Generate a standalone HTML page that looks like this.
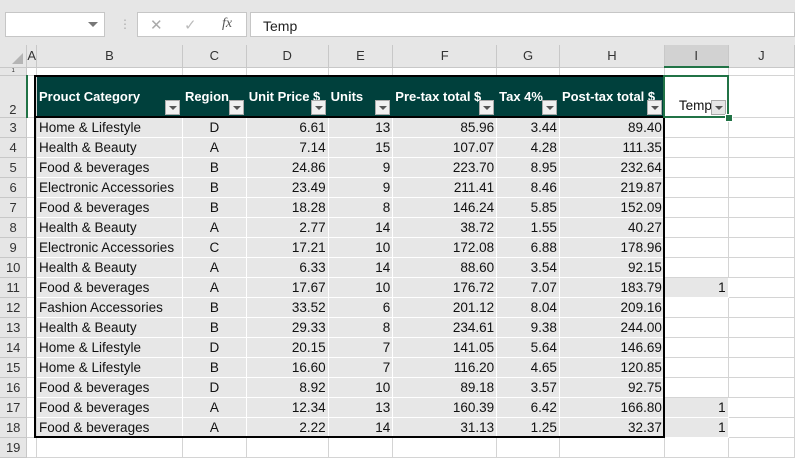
<!DOCTYPE html>
<html><head><meta charset="utf-8"><style>
body{margin:0;width:795px;height:460px;overflow:hidden;background:#fff;font-family:"Liberation Sans",sans-serif;position:relative}
.top{position:absolute;left:0;top:0;width:795px;height:45px;background:#e6e6e6}
.nb{position:absolute;left:5px;top:12px;width:100px;height:25px;background:#fff;border:1px solid #c6c6c6;box-sizing:border-box}
.fb{position:absolute;left:137px;top:12px;width:110px;height:25px;background:#fff;border:1px solid #c6c6c6;box-sizing:border-box}
.fx{position:absolute;left:250px;top:12px;width:545px;height:25px;background:#fff;border:1px solid #c6c6c6;box-sizing:border-box;font-size:14px;padding:5px 0 0 12px;color:#222}
table{position:absolute;left:0;top:45px;border-collapse:collapse;table-layout:fixed;font-size:13.5px}
td{padding:0 2px;white-space:nowrap;overflow:hidden;border-right:1px solid #d4d4d4;border-bottom:1px solid #d4d4d4;box-sizing:border-box;color:#111}
tr.ch td{background:#e6e6e6;text-align:center;color:#333;height:22px;border-color:#c8c8c8;font-size:13px}
td.rh{background:#e6e6e6;text-align:center;color:#333;border-color:#c8c8c8;padding:0;font-size:13px}
tr.d td{height:20px;background:#e7e7e7;border-color:#fff}
tr.d td.e{background:#fff;border-color:#d4d4d4}
tr.d td.rh{background:#e6e6e6;border-color:#c8c8c8}
.r{text-align:right}.c{text-align:center}
tr.h td.t{background:#00403c;color:#fff;font-weight:bold;position:relative;vertical-align:middle;border-color:#00403c;font-size:13px}
.f{position:absolute;right:2px;bottom:2px;width:15px;height:15px;background:#f0f0f0;border:1px solid #aaa;box-sizing:border-box}
.f:after{content:"";position:absolute;left:3px;top:5px;border-left:4px solid transparent;border-right:4px solid transparent;border-top:4px solid #555}
</style></head><body>
<div class="top">
<div class="nb"><span style="position:absolute;right:6px;top:9px;border-left:5px solid transparent;border-right:5px solid transparent;border-top:5px solid #777"></span></div>
<div style="position:absolute;left:119px;top:17px;color:#aaa;font-size:12px">⋮</div>
<div class="fb"><span style="position:absolute;left:12px;top:3px;color:#aaa;font-size:15px">✕</span><span style="position:absolute;left:46px;top:3px;color:#bbb;font-size:15px">✓</span><span style="position:absolute;left:84px;top:3px;color:#555;font-size:14px;font-style:italic;font-family:'Liberation Serif',serif">fx</span></div>
<div class="fx">Temp</div>
</div>
<table>
<colgroup><col style="width:27px"><col style="width:8px"><col style="width:146px"><col style="width:64px"><col style="width:82px"><col style="width:65px"><col style="width:104px"><col style="width:63px"><col style="width:105px"><col style="width:64px"><col style="width:67px"></colgroup>
<tr class="ch"><td class="rh" style="position:relative"><span style="position:absolute;right:3px;bottom:3px;border-left:11px solid transparent;border-bottom:11px solid #b4b4b4"></span></td><td style="padding:0">A</td><td>B</td><td>C</td><td>D</td><td>E</td><td>F</td><td>G</td><td>H</td><td style="background:#d2d2d2;border-bottom:2px solid #217346">I</td><td>J</td></tr>
<tr style="height:8px"><td class="rh" style="font-size:6px">1</td><td></td><td></td><td></td><td></td><td></td><td></td><td></td><td></td><td></td><td></td></tr>
<tr class="h" style="height:42px"><td class="rh" style="vertical-align:bottom;border-right:2px solid #217346">2</td><td></td>
<td class="t">Prouct Category<span class="f"></span></td><td class="t">Region<span class="f"></span></td><td class="t">Unit Price $<span class="f"></span></td><td class="t">Units<span class="f"></span></td><td class="t">Pre-tax total $<span class="f"></span></td><td class="t">Tax 4%<span class="f"></span></td><td class="t">Post-tax total $<span class="f"></span></td>
<td style="position:relative;vertical-align:bottom;padding:0 0 4px 14px">Temp<span class="f" style="background:#e6e6e6"></span></td><td></td></tr>
<tr class="d"><td class="rh">3</td><td class="e"></td><td>Home &amp; Lifestyle</td><td class="c">D</td><td class="r">6.61</td><td class="r">13</td><td class="r">85.96</td><td class="r">3.44</td><td class="r">89.40</td><td class="e"></td><td class="e"></td></tr>
<tr class="d"><td class="rh">4</td><td class="e"></td><td>Health &amp; Beauty</td><td class="c">A</td><td class="r">7.14</td><td class="r">15</td><td class="r">107.07</td><td class="r">4.28</td><td class="r">111.35</td><td class="e"></td><td class="e"></td></tr>
<tr class="d"><td class="rh">5</td><td class="e"></td><td>Food &amp; beverages</td><td class="c">B</td><td class="r">24.86</td><td class="r">9</td><td class="r">223.70</td><td class="r">8.95</td><td class="r">232.64</td><td class="e"></td><td class="e"></td></tr>
<tr class="d"><td class="rh">6</td><td class="e"></td><td>Electronic Accessories</td><td class="c">B</td><td class="r">23.49</td><td class="r">9</td><td class="r">211.41</td><td class="r">8.46</td><td class="r">219.87</td><td class="e"></td><td class="e"></td></tr>
<tr class="d"><td class="rh">7</td><td class="e"></td><td>Food &amp; beverages</td><td class="c">B</td><td class="r">18.28</td><td class="r">8</td><td class="r">146.24</td><td class="r">5.85</td><td class="r">152.09</td><td class="e"></td><td class="e"></td></tr>
<tr class="d"><td class="rh">8</td><td class="e"></td><td>Health &amp; Beauty</td><td class="c">A</td><td class="r">2.77</td><td class="r">14</td><td class="r">38.72</td><td class="r">1.55</td><td class="r">40.27</td><td class="e"></td><td class="e"></td></tr>
<tr class="d"><td class="rh">9</td><td class="e"></td><td>Electronic Accessories</td><td class="c">C</td><td class="r">17.21</td><td class="r">10</td><td class="r">172.08</td><td class="r">6.88</td><td class="r">178.96</td><td class="e"></td><td class="e"></td></tr>
<tr class="d"><td class="rh">10</td><td class="e"></td><td>Health &amp; Beauty</td><td class="c">A</td><td class="r">6.33</td><td class="r">14</td><td class="r">88.60</td><td class="r">3.54</td><td class="r">92.15</td><td class="e"></td><td class="e"></td></tr>
<tr class="d"><td class="rh">11</td><td class="e"></td><td>Food &amp; beverages</td><td class="c">A</td><td class="r">17.67</td><td class="r">10</td><td class="r">176.72</td><td class="r">7.07</td><td class="r">183.79</td><td class="r">1</td><td class="e"></td></tr>
<tr class="d"><td class="rh">12</td><td class="e"></td><td>Fashion Accessories</td><td class="c">B</td><td class="r">33.52</td><td class="r">6</td><td class="r">201.12</td><td class="r">8.04</td><td class="r">209.16</td><td class="e"></td><td class="e"></td></tr>
<tr class="d"><td class="rh">13</td><td class="e"></td><td>Health &amp; Beauty</td><td class="c">B</td><td class="r">29.33</td><td class="r">8</td><td class="r">234.61</td><td class="r">9.38</td><td class="r">244.00</td><td class="e"></td><td class="e"></td></tr>
<tr class="d"><td class="rh">14</td><td class="e"></td><td>Home &amp; Lifestyle</td><td class="c">D</td><td class="r">20.15</td><td class="r">7</td><td class="r">141.05</td><td class="r">5.64</td><td class="r">146.69</td><td class="e"></td><td class="e"></td></tr>
<tr class="d"><td class="rh">15</td><td class="e"></td><td>Home &amp; Lifestyle</td><td class="c">B</td><td class="r">16.60</td><td class="r">7</td><td class="r">116.20</td><td class="r">4.65</td><td class="r">120.85</td><td class="e"></td><td class="e"></td></tr>
<tr class="d"><td class="rh">16</td><td class="e"></td><td>Food &amp; beverages</td><td class="c">D</td><td class="r">8.92</td><td class="r">10</td><td class="r">89.18</td><td class="r">3.57</td><td class="r">92.75</td><td class="e"></td><td class="e"></td></tr>
<tr class="d"><td class="rh">17</td><td class="e"></td><td>Food &amp; beverages</td><td class="c">A</td><td class="r">12.34</td><td class="r">13</td><td class="r">160.39</td><td class="r">6.42</td><td class="r">166.80</td><td class="r">1</td><td class="e"></td></tr>
<tr class="d"><td class="rh">18</td><td class="e"></td><td>Food &amp; beverages</td><td class="c">A</td><td class="r">2.22</td><td class="r">14</td><td class="r">31.13</td><td class="r">1.25</td><td class="r">32.37</td><td class="r">1</td><td class="e"></td></tr>
<tr class="d"><td class="rh">19</td><td class="e"></td><td class="e"></td><td class="e"></td><td class="e"></td><td class="e"></td><td class="e"></td><td class="e"></td><td class="e"></td><td class="e"></td><td class="e"></td></tr>
</table>
<div style="position:absolute;left:34px;top:75px;width:631px;height:363px;border:2px solid #000;box-sizing:border-box"></div>
<div style="position:absolute;left:34px;top:116px;width:631px;height:2px;background:#000"></div>
<div style="position:absolute;left:663px;top:75px;width:66px;height:43px;border:2px solid #217346;box-sizing:border-box"></div>
<div style="position:absolute;left:725px;top:114px;width:6px;height:6px;background:#217346;border:1px solid #fff"></div>
</body></html>
